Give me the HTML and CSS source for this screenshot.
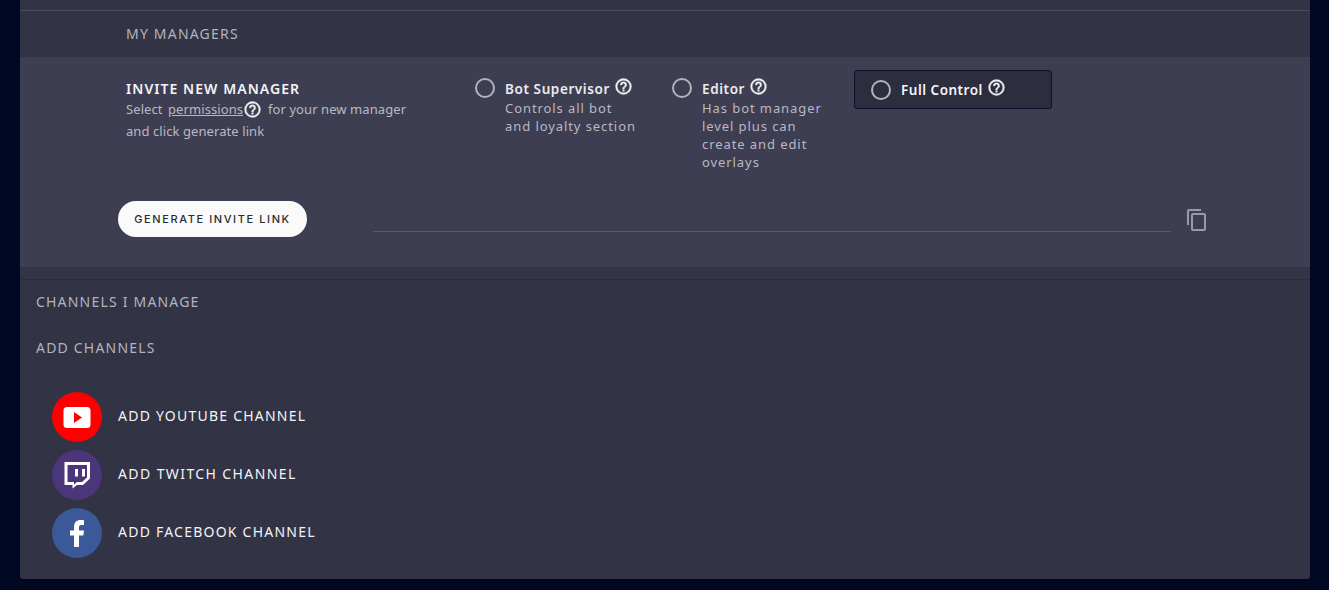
FILE: index.html
```html
<!DOCTYPE html>
<html lang="en">
<head>
<meta charset="utf-8">
<title>Managers</title>
<link rel="stylesheet" href="styles.css">
</head>
<body>
<main class="panel">
  <div class="top-strip"></div>
  <h2 class="heading managers-heading">MY MANAGERS</h2>
  <section class="invite">
    <div class="invite-top">
      <div class="intro">
        <h3 class="intro-title">INVITE NEW MANAGER</h3>
        <p class="intro-text">Select <u class="perm">permissions</u><svg class="help help-inline" viewBox="0 0 24 24"><use href="#help"/></svg> &nbsp;for your new manager</p>
        <p class="intro-text">and click generate link</p>
      </div>
      <div class="option option-bot">
        <span class="radio"></span>
        <div class="option-body">
          <div class="option-title">Bot Supervisor<svg class="help" viewBox="0 0 24 24"><use href="#help"/></svg></div>
          <div class="option-desc">Controls all bot<br>and loyalty section</div>
        </div>
      </div>
      <div class="option option-editor">
        <span class="radio"></span>
        <div class="option-body">
          <div class="option-title">Editor<svg class="help" viewBox="0 0 24 24"><use href="#help"/></svg></div>
          <div class="option-desc">Has bot manager<br>level plus can<br>create and edit<br>overlays</div>
        </div>
      </div>
      <div class="option option-full">
        <span class="radio"></span>
        <div class="option-title">Full Control<svg class="help" viewBox="0 0 24 24"><use href="#help"/></svg></div>
      </div>
    </div>
    <div class="invite-bottom">
      <button class="generate" type="button">GENERATE INVITE LINK</button>
      <div class="link-field"></div>
      <svg class="copy" viewBox="0 0 24 24"><path d="M16 1H4a2 2 0 0 0-2 2v14h2V3h12V1zm3 4H8a2 2 0 0 0-2 2v14a2 2 0 0 0 2 2h11a2 2 0 0 0 2-2V7a2 2 0 0 0-2-2zm0 16H8V7h11v14z"/></svg>
    </div>
  </section>
  <div class="strip"></div>
  <h2 class="heading channels-heading">CHANNELS I MANAGE</h2>
  <h2 class="heading add-heading">ADD CHANNELS</h2>
  <ul class="channels">
    <li class="channel">
      <span class="badge badge-yt"><svg viewBox="0 0 28 28"><path class="fill-white" fill-rule="evenodd" d="M4 4h20a3.500 3.500 0 0 1 3.500 3.500v14a3.500 3.500 0 0 1-3.500 3.500H4a3.500 3.500 0 0 1-3.500-3.500v-14A3.500 3.500 0 0 1 4 4zM11 9v11l8-5.500z"/></svg></span>
      <span class="channel-label">ADD YOUTUBE CHANNEL</span>
    </li>
    <li class="channel">
      <span class="badge badge-tw"><svg viewBox="0 0 28 28"><path class="fill-white" fill-rule="evenodd" d="M1.500 1h25.500v16.500l-7 6.500h-6l-4.500 3.500v-3.500H1.500zM4.500 4v17h6.500v2.500l3-2.500h5l5-4.500V4zM12 8h3v7.500h-3zM19 8h3v7.500h-3z"/></svg></span>
      <span class="channel-label channel-label-tw">ADD TWITCH CHANNEL</span>
    </li>
    <li class="channel">
      <span class="badge badge-fb"><svg viewBox="0 0 28 28"><path class="fill-white" d="M11 28V16.500H7V11.500h4V8c0-4.500 2.500-7 6.500-7 1.500 0 3 .1 3.500.2v4.800h-2.500c-2 0-2.500 1-2.500 2.500v3h5l-.7 5H16V28z"/></svg></span>
      <span class="channel-label">ADD FACEBOOK CHANNEL</span>
    </li>
  </ul>
</main>
<svg class="defs" aria-hidden="true">
  <symbol id="help" viewBox="0 0 24 24">
    <path d="M12 2a10 10 0 1 0 0 20 10 10 0 0 0 0-20zm0 18a8 8 0 1 1 0-16 8 8 0 0 1 0 16zm-1-4h2v2h-2v-2zm1-10a4 4 0 0 0-4 4h2a2 2 0 1 1 4 0c0 2-3 1.750-3 5h2c0-2.250 3-2.500 3-5a4 4 0 0 0-4-4z"/>
  </symbol>
</svg>
</body>
</html>
```
FILE: styles.css
```css
* { box-sizing: border-box; }
html, body { margin: 0; padding: 0; }
body {
  height: 590px;
  overflow: hidden;
  background: #000824;
  font-family: "Noto Sans", "Open Sans", sans-serif;
  padding: 0 19px 0 20px;
}
.panel {
  height: 579px;
  background: #323345;
  border-radius: 0 0 3px 3px;
}
.top-strip {
  height: 11px;
  border-bottom: 1px solid #4a4b5d;
}
.heading {
  margin: 0;
  font-size: 14px;
  font-weight: 400;
  letter-spacing: 1.2px;
  line-height: 20px;
  color: #b4b4bd;
}
.managers-heading { padding: 13px 0 13px 106px; }
.invite {
  height: 210px;
  background: #3e3e53;
  padding-top: 13px;
}
.invite-top {
  display: flex;
  height: 131px;
  align-items: flex-start;
}
.intro { width: 349px; margin-left: 106px; padding-top: 9px; }
.intro-title {
  margin: 0;
  font-size: 14px;
  line-height: 19px;
  font-weight: 600;
  letter-spacing: 1.05px;
  color: #f4f4f6;
}
.intro-text {
  margin: 0;
  font-size: 13px;
  letter-spacing: 0.08px;
  line-height: 22px;
  color: #b9b9c2;
  display: flex;
  align-items: center;
  white-space: pre;
}
.perm { margin-left: 2px; }
.help {
  width: 19px;
  height: 19px;
  fill: #f0f0f3;
  stroke: #f0f0f3;
  stroke-width: 0.5;
  margin-left: 4px;
  vertical-align: -2px;
  flex: none;
}
.help-inline { margin: 0 -1px 0 0; }
.option { display: flex; align-items: flex-start; }
.radio {
  width: 20px;
  height: 20px;
  border: 2px solid #b3b3bc;
  border-radius: 50%;
  flex: none;
  margin-top: 8px;
}
.option-body { margin-left: 10px; padding-top: 7px; }
.option-body .option-title { margin-bottom: 1px; }
.option-title {
  font-size: 13.500px;
  font-weight: 600;
  letter-spacing: 0.6px;
  line-height: 18px;
  color: #ebebee;
  white-space: nowrap;
}
.option-desc {
  font-size: 13px;
  letter-spacing: 0.92px;
  line-height: 18px;
  color: #b9b9c2;
  white-space: nowrap;
}
.option-bot { width: 197px; }
.option-editor { width: 182px; }
.option-full {
  width: 198px;
  height: 39px;
  background: #2c2d3e;
  border: 1px solid #0a0f2b;
  border-radius: 3px;
  padding-left: 16px;
  align-items: center;
}
.option-full .radio { margin-top: 0; }
.option-full .option-title { margin-left: 10px; color: #f5f5f7; letter-spacing: 0.5px; position: relative; top: -1px; }
.invite-bottom {
  display: flex;
  align-items: flex-start;
}
.generate {
  width: 189px;
  height: 36px;
  margin-left: 98px;
  border: 0;
  border-radius: 18px;
  background: #fafafa;
  color: #2b2b33;
  font-family: Inter, "Noto Sans", sans-serif;
  font-size: 11px;
  font-weight: 500;
  letter-spacing: 1.6px;
  padding: 0;
}
.link-field {
  width: 798px;
  height: 31px;
  margin-left: 66px;
  border-bottom: 1px solid #59596b;
}
.copy {
  width: 24px;
  height: 24px;
  fill: #9a9aa5;
  margin: 7px 0 0 14px;
}
.strip {
  height: 13px;
  border-bottom: 1px solid #2b2c3d;
  background: #333446;
}
.channels-heading { padding: 12px 0 0 16px; }
.add-heading { padding: 26px 0 0 16px; }
.channels {
  list-style: none;
  margin: 0;
  padding: 34px 0 0 32px;
  display: flex;
  flex-direction: column;
  gap: 8px;
}
.channel { display: flex; align-items: center; height: 50px; }
.badge {
  width: 50px;
  height: 50px;
  border-radius: 50%;
  display: flex;
  align-items: center;
  justify-content: center;
  flex: none;
}
.badge svg { width: 28px; height: 28px; }
.fill-white { fill: #fff; }
.badge-yt { background: #fe0000; }
.badge-tw { background: #4b367c; }
.badge-fb { background: #3b5998; }
.channel-label {
  margin-left: 16px;
  font-size: 14px;
  letter-spacing: 1.23px;
  color: #f4f4f7;
  margin-bottom: 4px;
}
.channel-label-tw { letter-spacing: 1.4px; }
.defs { width: 0; height: 0; display: block; }
```
